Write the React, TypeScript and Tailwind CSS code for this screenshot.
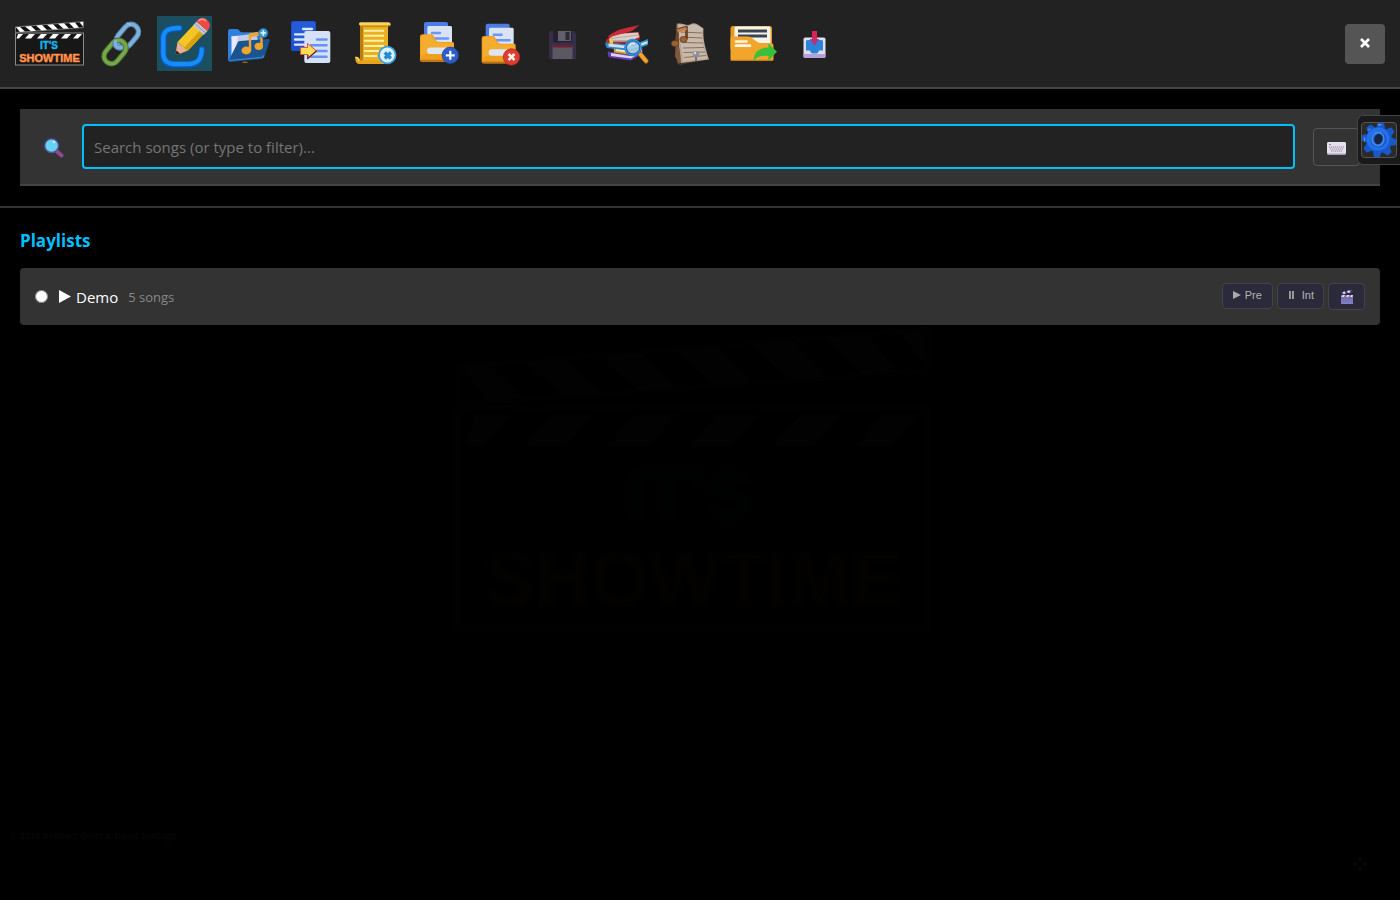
import React, { useState } from 'react';

interface Playlist {
  id: string;
  name: string;
  songs: number;
}

interface IconProps {
  children: React.ReactNode;
}

const playlists: Playlist[] = [{ id: 'demo', name: 'Demo', songs: 5 }];

const Icon = ({ children }: IconProps) => (
  <svg viewBox="0 0 55 55" className="block size-[55px]" fill="none" aria-hidden="true">
    {children}
  </svg>
);

const ShowtimeLogo = ({ className }: { className: string }) => (
  <svg viewBox="0 0 71 45" className={className} aria-hidden="true">
    <rect x="0.5" y="12" width="68" height="32" fill="#171717" stroke="#8a8a8a" />
    <path d="M0.5 6 L68.5 0.6 V6.6 L0.5 11.4 Z" fill="#111" stroke="#8a8a8a" strokeWidth="0.8" />
    <g fill="#fff">
      <path d="M1 6.2 L5 5.9 L10 10.6 L5 11 Z" />
      <path d="M10 5.4 L16 5 L21 9.8 L16 10.2 Z" />
      <path d="M21 4.6 L27 4.1 L32 9 L26.5 9.4 Z" />
      <path d="M32 3.7 L38 3.2 L43 8.2 L37.5 8.6 Z" />
      <path d="M43 2.8 L49 2.3 L54 7.4 L48.5 7.8 Z" />
      <path d="M54 2 L60 1.5 L64 6.7 L59 7.1 Z" />
      <path d="M64.5 1.2 L68 0.9 V5.5 Z" />
      <path d="M3 13 H8 L4 17.5 H1.5 Z" />
      <path d="M14 13 H20 L16 17.5 H10 Z" />
      <path d="M26 13 H32 L28 17.5 H22 Z" />
      <path d="M38 13 H44 L40 17.5 H34 Z" />
      <path d="M50 13 H56 L52 17.5 H46 Z" />
      <path d="M62 13 H67 L63 17.5 H58 Z" />
    </g>
    <text x="34" y="28" textAnchor="middle" fontSize="10" fontWeight="700" fill="#12b5ee" stroke="#12b5ee" strokeWidth="0.4" fontFamily="'Liberation Sans', sans-serif">IT'S</text>
    <text x="34.5" y="40.5" textAnchor="middle" fontSize="11" fontWeight="700" fill="#ffb070" stroke="#f0742a" strokeWidth="0.6" fontFamily="'Liberation Sans', sans-serif">SHOWTIME</text>
  </svg>
);

const LinkIcon = () => (
  <Icon>
    <rect x="20.5" y="12.5" width="26" height="15" rx="7.5" transform="rotate(-50 33.5 20)" stroke="#4f7fa8" strokeWidth="5.5" />
    <rect x="20.5" y="12.5" width="26" height="15" rx="7.5" transform="rotate(-50 33.5 20)" stroke="#7fb0dc" strokeWidth="3.6" />
    <rect x="8" y="28.5" width="26" height="15" rx="7.5" transform="rotate(-50 21 36)" stroke="#46702b" strokeWidth="5.5" />
    <rect x="8" y="28.5" width="26" height="15" rx="7.5" transform="rotate(-50 21 36)" stroke="#76a84b" strokeWidth="3.6" />
    <path d="M22 25 C20 30 23 33 28 31.5" stroke="#4f7fa8" strokeWidth="5.5" />
    <path d="M21.8 24 C20 30 23 33 28.5 31" stroke="#7fb0dc" strokeWidth="3.6" />
    <path d="M33 6.5 L36 9" stroke="#a9cdec" strokeWidth="1" />
  </Icon>
);

const EditIcon = () => (
  <Icon>
    <path d="M22.5 12.3 C12 11.5 6.3 15 6.3 22 V37 C6.3 45 10 48.5 18 48.5 H31 C41 48.5 44.5 44 44.7 33.5" stroke="#0b55c9" strokeWidth="6.6" strokeLinecap="round" />
    <path d="M22.5 12 C12 11.5 6.5 15 6.3 22 V37 C6.3 44.5 10 48 18 48 H31 C41 48 44.5 43 44.7 33.5" stroke="#168cf5" strokeWidth="4.4" strokeLinecap="round" />
    <path d="M20.5 26 L31 34.5 L21 38.5 C19 39 18.3 38 18.8 36.5 Z" fill="#edb08e" />
    <path d="M19.5 34.5 L23 37.6 L20.5 38.7 C19 39 18.3 38 18.8 36.5 Z" fill="#35202b" />
    <path d="M20.5 26 L37.5 8 L47.5 17 L31 34.5 Z" fill="#f3c526" />
    <path d="M27 32 L43.5 14 L47.5 17 L31 34.5 Z" fill="#d9a10e" />
    <path d="M36 9.5 L39.5 5.5 L50.5 15 L46.5 19 Z" fill="#c6c4d0" />
    <path d="M37.8 7.5 L48.5 17" stroke="#8f8c9c" strokeWidth="0.8" />
    <path d="M39.5 5.5 C43 0.5 47 1 50 4 C54 7.5 53.5 11 50.5 15 Z" fill="#ee4b42" />
    <path d="M42 4.5 C44 2.5 47 3 48.5 4.5" stroke="#ff9a8c" strokeWidth="1.5" strokeLinecap="round" />
  </Icon>
);

const MusicFolderIcon = () => (
  <Icon>
    <path d="M8 15.5 C8 13.5 9 13 10.5 13 H17 C19 13 20 16.3 22 16.3 H38 C40 16.3 41 17.5 41 19 V30 L10 45.5 C8.5 45.5 8 44.5 8 43 Z" fill="#2e7fe0" />
    <path d="M11.5 20.5 L36 17.5 L39 28 L14 42 Z" fill="#c5cbe8" />
    <path d="M11.5 20.5 L18 19.7 L14 42 L11.5 44 Z" fill="#e8e8f6" />
    <path d="M17.5 27 C18 25.5 19 25 20.5 25 L48 23 C49.5 23 50 24 49.5 25.5 L44.5 40.5 C44 42 43 42.7 41.5 43 L10.5 46 C9 46 8.7 45 9.2 43.5 Z" fill="#1c548f" />
    <path d="M9.2 44.5 L41.5 41.5 C43 41.3 43.5 41 44 39.5" stroke="#388ee2" strokeWidth="1.2" />
    <path d="M30 35 V18.5 L41.5 16.5 V31" stroke="#eda62f" strokeWidth="2.4" strokeLinejoin="round" />
    <path d="M30 19.5 L41.5 17.5" stroke="#eda62f" strokeWidth="3.5" />
    <ellipse cx="26.3" cy="34.5" rx="4.8" ry="3.9" fill="#f0a52b" />
    <ellipse cx="38.8" cy="30.3" rx="4.2" ry="3.6" fill="#f0a52b" />
    <circle cx="43.3" cy="17" r="4.6" fill="#3c9bd8" stroke="#226da8" strokeWidth="0.8" />
    <path d="M43.3 14.3 V19.7 M40.6 17 H46" stroke="#e6f7ff" strokeWidth="1.5" />
    <path d="M22.5 46.3 H27.5" stroke="#c07c22" strokeWidth="1" />
  </Icon>
);

const CopyDocsIcon = () => (
  <Icon>
    <rect x="8" y="5" width="25" height="30" rx="2" fill="#1c4fd0" />
    <rect x="9" y="6" width="23" height="20" rx="2" fill="#2b62df" opacity="0.6" />
    <path d="M20 13 H29 M12 18.3 H23 M12 23.5 H23 M12 28.7 H21" stroke="#dce9ff" strokeWidth="2.3" strokeLinecap="round" />
    <rect x="21.3" y="15" width="26" height="32" rx="2" fill="#d5e1f5" />
    <path d="M34 23.5 H43.5 M28 29.3 H43.5 M30 35 H43.5 M28 40.7 H43.5" stroke="#6794f2" strokeWidth="2.5" strokeLinecap="round" />
    <path d="M17.5 31.5 H24.5 V27.5 L33.5 35 L24.8 42.5 V38.5 H17.5 Z" fill="#ffdc52" stroke="#d9524a" strokeWidth="1" strokeLinejoin="round" />
    <path d="M33.5 35 L24.8 42.5 V39" stroke="#642230" strokeWidth="1.2" />
  </Icon>
);

const ScrollIcon = () => (
  <Icon>
    <path d="M14 8 H42 V44 C42 47 40 48 37 48 H16 Z" fill="#e9b025" />
    <path d="M14 8 H17 V46 H14 Z" fill="#bd7e10" />
    <path d="M13 8 C13 6.5 14 6.3 16 6.3 H42 C44 6.3 45 7 44.5 9.5 H16 C14 9.5 13 9.5 13 8 Z" fill="#f9d560" />
    <path d="M16 9.5 H44.5 L42 11 H16 Z" fill="#c78a12" />
    <path d="M9.3 41.5 C12 40.5 14 42 14 44.5 H36 V48 H13 C10.5 48 9 45 9.3 41.5 Z" fill="#e9a31b" />
    <path d="M9.3 41.5 C11.5 41 13 42.5 13 45" stroke="#ffe083" strokeWidth="1.3" />
    <path d="M18 14.7 H38 M18 19.7 H38 M18 24.8 H38 M18 30 H38 M18 35 H33 M18 40 H31" stroke="#fff1a0" strokeWidth="1.9" />
    <circle cx="41.3" cy="39" r="8.3" fill="#d9f1fb" stroke="#399fe0" strokeWidth="1.7" />
    <path d="M38.8 36.5 L44.8 42.5 M44.8 36.5 L38.8 42.5" stroke="#248bd2" strokeWidth="3.4" />
  </Icon>
);

const FolderFiles = () => (
  <g>
    <rect x="15" y="6" width="24" height="22" rx="2" fill="#4d7ce6" />
    <path d="M18.3 12 C18.3 10.5 19 10 20.5 10 H41 C42.5 10 43 10.5 43 12 V32 H18.3 Z" fill="#d9e3f4" />
    <path d="M23 17 H31 M23 22.5 H39" stroke="#6b96f3" strokeWidth="2.4" strokeLinecap="round" />
    <path d="M11 21 C11 19 12 18.3 14 18.3 H22 C26 18.3 25 26 30 26 H43 C44.5 26 45 26.5 45 28 V43.5 C45 45 44.5 45.7 43 45.7 H13 C11.5 45.7 11 45 11 43.5 Z" fill="#f0a01f" />
    <path d="M12 20.5 C13 19.3 14 19.3 15 19.3 H21 C25 20 24 27 30 27 H44 V36 C34 39 20 35 12 40 Z" fill="#f8b93e" opacity="0.5" />
    <path d="M11.5 44.5 H44" stroke="#c87012" strokeWidth="1.5" />
    <rect x="18" y="31.5" width="24" height="6.5" rx="3.2" fill="#dfe5f2" />
  </g>
);

const FolderAddIcon = () => (
  <Icon>
    <FolderFiles />
    <circle cx="41.3" cy="39.3" r="8.2" fill="#2c5dc9" stroke="#1f4599" strokeWidth="0.8" />
    <path d="M41.3 34.8 V43.8 M36.8 39.3 H45.8" stroke="#f5f8ff" strokeWidth="2.2" />
  </Icon>
);

const FolderRemoveIcon = () => (
  <Icon>
    <g transform="translate(-1.3 1.8)">
      <FolderFiles />
    </g>
    <circle cx="39.5" cy="41" r="8.2" fill="#de3c30" stroke="#a92c24" strokeWidth="0.8" />
    <path d="M36.5 38 L42.5 44 M42.5 38 L36.5 44" stroke="#fff0ea" strokeWidth="2.6" />
  </Icon>
);

const FloppyIcon = () => (
  <Icon>
    <path d="M16 15 H38.5 L41 17.5 V41.5 C41 42.8 40.3 43.3 39 43.3 H16 C14.7 43.3 14 42.8 14 41.5 V17 C14 15.7 14.7 15 16 15 Z" fill="#352f48" />
    <path d="M18 15 H37 V25 C37 26 36.5 26.3 35.5 26.3 H19.5 C18.5 26.3 18 26 18 25 Z" fill="#251f30" />
    <rect x="23" y="15" width="13" height="10" fill="#625f69" />
    <rect x="30.5" y="16" width="4" height="8" fill="#2d283a" />
    <rect x="17.5" y="29" width="20" height="14" fill="#5c5861" />
    <rect x="17.5" y="29" width="20" height="2.5" fill="#6d1f33" />
  </Icon>
);

const BooksIcon = () => (
  <Icon>
    <path d="M10 35.5 L32 39 L44.5 32 V37.5 L33 44.5 L11.5 41.5 C9.5 40 9.5 37 10 35.5 Z" fill="#6739b8" />
    <path d="M13 37 L32 40 L44 34 V36 L33 42.5 L13 40 Z" fill="#dcd5e6" />
    <path d="M15.5 31 L34 34 L44 28 V33 L33 39 L16 36.5 Z" fill="#d59d2c" />
    <path d="M18 32.5 L34 35 L43 30.5 V32 L33 37 L18 35 Z" fill="#f1e5cb" />
    <path d="M8 25.5 L34 29 L50 23 V29 L34 35 L9 32 C7 30 7 27 8 25.5 Z" fill="#268dc8" />
    <path d="M10.5 27.5 L34 30.5 L49.5 25 V27.5 L34 33 L10.5 30.5 Z" fill="#d8dde3" />
    <path d="M8 24 L16 17 L41 16 L42 23 L31 27.5 L9.5 27 C7.5 26.5 7.5 25 8 24 Z" fill="#b4262e" />
    <path d="M11 23 L17 18 L40 16.5 L41.5 21 L31 25.5 L12 25.5 Z" fill="#d9cfc6" />
    <path d="M12 24.5 L31 24.5 M13 22.5 L41 19" stroke="#a7978e" strokeWidth="0.7" />
    <path d="M9.5 21.5 C13 17 20 13.5 28 12 L41.5 9 L34 15 L16 20 Z" fill="#cd2937" />
    <path d="M11.5 23 H15 V28 L11.5 27.5 Z" fill="#eec94a" />
    <path d="M40.5 36 L48 45" stroke="#b66d18" strokeWidth="5" strokeLinecap="round" />
    <path d="M42.5 38.5 L48 44.8" stroke="#f4a332" strokeWidth="3.5" strokeLinecap="round" />
    <circle cx="35" cy="31.5" r="7.4" fill="#a3c9e6" fillOpacity="0.85" stroke="#1c68b4" strokeWidth="2.6" />
    <circle cx="35" cy="31.5" r="7.8" stroke="#42a3e4" strokeWidth="1" />
    <path d="M31.5 30 C32.5 27.5 35 27 37 28" stroke="#eef7ff" strokeWidth="1.3" />
  </Icon>
);

const SheetMusicIcon = () => (
  <Icon>
    <path d="M16 10 L14 24 L16 47 L19 49.5 L23 48 L45 44 Z" fill="#51392a" />
    <path d="M15.5 8 L17 7 L24 45 L17.5 47.5 L14 40 Z" fill="#80583c" />
    <path d="M16.5 8 C21 6 26 11 30 8 C34 5.5 38 9 42.5 12.5 C41.5 24 45 34 48 43.5 L20 47 C20 35 15 20 16.5 8 Z" fill="#b7a797" />
    <path d="M18 9.5 C22 8.5 26 11.5 31 9 C34 8 38 10 41.5 12.5 C40 24 43 34 46 42.5 L22 45 C22 34 17 20 18 9.5 Z" fill="#c8bbad" />
    <path d="M19.5 16 L41 17 M20 21 L41 22 M21 26.5 L42 27 M22 32 L43 31.5 M22.5 36.5 L44 36 M23 41.5 L45 39.5" stroke="#8b6e55" strokeWidth="1" />
    <path d="M16.5 27 V13.5 L25.5 11 V23" stroke="#704424" strokeWidth="2.8" strokeLinejoin="round" />
    <path d="M16.5 15 L25.5 12.5" stroke="#c28352" strokeWidth="3" />
    <ellipse cx="14" cy="27.5" rx="3.8" ry="3.1" fill="#9c6236" stroke="#583319" strokeWidth="0.7" />
    <ellipse cx="22.5" cy="23.5" rx="3.6" ry="3" fill="#9c6236" stroke="#583319" strokeWidth="0.7" />
    <circle cx="35" cy="38.3" r="3.3" fill="#8f8e92" />
    <circle cx="34" cy="37" r="1.3" fill="#d5d4d6" />
    <path d="M35 41 V45" stroke="#5e5b5d" strokeWidth="1.5" />
  </Icon>
);

const FolderExportIcon = () => (
  <Icon>
    <rect x="6.5" y="10" width="41.5" height="25" rx="2.5" fill="#e79a25" />
    <path d="M10.5 13 C10.5 11 11 10.5 13 10.5 H44 C46 10.5 46.5 11 46.5 13 V30 H10.5 Z" fill="#f6f4ee" />
    <path d="M14 15 H43 M14 20 H43" stroke="#3b454b" strokeWidth="3" />
    <path d="M6.5 22.5 C6.5 21 7.5 20.5 9 20.5 H24 C28 20.5 32 26.5 36 27 H46 C48.5 27 49.5 28 49.5 30 V43 C49.5 44.5 49 45 47.5 45 H8.5 C7 45 6.5 44.5 6.5 43 Z" fill="#f2a52b" />
    <path d="M7 44.3 H49" stroke="#c77b15" strokeWidth="1.2" />
    <path d="M12 25.5 H22.5 M12 29.7 H26" stroke="#fff6e1" strokeWidth="2.7" strokeLinecap="round" />
    <path d="M29.5 45 C30 36 35 31.5 44.5 31.5 V27.5 L53 35.8 L44.5 44.5 V40 C37 39 32 41 29.5 45 Z" fill="#37c13a" />
  </Icon>
);

const InboxIcon = () => (
  <Icon>
    <path d="M18.5 21.5 H36.5 C38 21.5 38.5 22.2 38.5 23.5 V40 C38.5 41.3 38 42 36.5 42 H18.5 C17 42 16.5 41.3 16.5 40 V23.5 C16.5 22.2 17 21.5 18.5 21.5 Z" fill="#e1dcf0" />
    <path d="M16.5 38 H38.5 V40 C38.5 41.3 38 42 36.5 42 H18.5 C17 42 16.5 41.3 16.5 40 Z" fill="#b6a0db" />
    <path d="M19 26 C19 24.5 19.5 24 21 24 H34 C35.5 24 36 24.5 36 26 V34.5 H32.5 C31.5 34.5 31.5 37.5 29.5 37.5 H25.5 C23.5 37.5 23.5 34.5 22.5 34.5 H19 Z" fill="#2b84d8" />
    <path d="M25 15 H30 V23 H32 L27.5 29.5 L23 23 H25 Z" fill="#da2158" />
    <path d="M25 23 H23 L27.5 29.5 L32 23 Z" fill="#b33678" />
  </Icon>
);

const GearIcon = () => (
  <svg viewBox="0 0 36 36" className="block size-9" fill="none" aria-hidden="true">
    <g fill="#1759c9" transform="rotate(8 18 18)">
      <circle cx="18" cy="18" r="13" />
      <path d="M13 8 L15 1.5 C15.2 0.7 15.7 0.5 16.5 0.5 H19.5 C20.3 0.5 20.8 0.7 21 1.5 L23 8 V28 L21 34.5 C20.8 35.3 20.3 35.5 19.5 35.5 H16.5 C15.7 35.5 15.2 35.3 15 34.5 L13 28 Z" />
      <path d="M13 8 L15 1.5 C15.2 0.7 15.7 0.5 16.5 0.5 H19.5 C20.3 0.5 20.8 0.7 21 1.5 L23 8 V28 L21 34.5 C20.8 35.3 20.3 35.5 19.5 35.5 H16.5 C15.7 35.5 15.2 35.3 15 34.5 L13 28 Z" transform="rotate(45 18 18)" />
      <path d="M13 8 L15 1.5 C15.2 0.7 15.7 0.5 16.5 0.5 H19.5 C20.3 0.5 20.8 0.7 21 1.5 L23 8 V28 L21 34.5 C20.8 35.3 20.3 35.5 19.5 35.5 H16.5 C15.7 35.5 15.2 35.3 15 34.5 L13 28 Z" transform="rotate(90 18 18)" />
      <path d="M13 8 L15 1.5 C15.2 0.7 15.7 0.5 16.5 0.5 H19.5 C20.3 0.5 20.8 0.7 21 1.5 L23 8 V28 L21 34.5 C20.8 35.3 20.3 35.5 19.5 35.5 H16.5 C15.7 35.5 15.2 35.3 15 34.5 L13 28 Z" transform="rotate(135 18 18)" />
    </g>
    <circle cx="17" cy="17" r="11.5" fill="#2270ea" />
    <circle cx="17.5" cy="17.5" r="8" fill="#1b56c0" />
    <ellipse cx="17" cy="17" rx="5.8" ry="6.5" stroke="#3f88f2" strokeWidth="1.8" />
    <ellipse cx="17.5" cy="17" rx="4" ry="5.3" fill="#17263f" transform="rotate(15 17.5 17)" />
    <path d="M17 2.5 L20 3 M7 8 L9 7 M3.500 16 V19" stroke="#4f92f5" strokeWidth="1.3" strokeLinecap="round" />
  </svg>
);

const MagnifierIcon = () => (
  <svg viewBox="0 0 20 20" className="block size-5" aria-hidden="true">
    <path d="M12.5 13 L17.5 17.5" stroke="#8a4b91" strokeWidth="4" strokeLinecap="round" />
    <circle cx="7.6" cy="7.7" r="6.8" fill="#67d2f2" stroke="#5553a5" strokeWidth="1.3" />
    <circle cx="10" cy="4" r="1.2" fill="#c8f2ff" />
  </svg>
);

const KeyboardIcon = () => (
  <svg viewBox="0 0 19 13" className="block h-[13px] w-[19px]" aria-hidden="true">
    <rect width="19" height="13" rx="1.5" fill="#a99bbd" />
    <rect width="19" height="11.5" rx="1.5" fill="#e6dfee" />
    <path d="M2 2.5 H4" stroke="#8c839a" strokeWidth="1" />
    <path d="M2 5 H17 M3 7 H16 M4 9 H15" stroke="#90889b" strokeWidth="1.2" strokeDasharray="1.3 0.7" />
  </svg>
);

const ClapperIcon = () => (
  <svg viewBox="0 0 14 15" className="block h-[15px] w-[14px]" aria-hidden="true">
    <defs>
      <linearGradient id="clapper" x1="0" y1="0" x2="0" y2="1">
        <stop offset="0" stopColor="#80608f" />
        <stop offset="1" stopColor="#7c83cf" />
      </linearGradient>
    </defs>
    <rect x="1" y="6" width="12" height="9" fill="url(#clapper)" />
    <path d="M1 3.5 L12 0.5 L12.7 2.8 L1.5 5.8 Z" fill="#51426e" />
    <path d="M2.5 3.1 L5 2.4 L5.5 4.7 L3.5 5.2 Z M7 1.9 L9.5 1.2 L10.5 3.4 L8 4 Z M2.5 6 H5 L4 8 H1.5 Z M7 6 H9.5 L8.5 8 H6 Z M11 6 H13 L12.5 8 H10 Z" fill="#ddd6ff" />
  </svg>
);

const tools = [
  { label: 'Link', icon: <LinkIcon /> },
  { label: 'Edit', icon: <EditIcon />, active: true },
  { label: 'Add music', icon: <MusicFolderIcon /> },
  { label: 'Copy', icon: <CopyDocsIcon /> },
  { label: 'Clear', icon: <ScrollIcon /> },
  { label: 'New playlist', icon: <FolderAddIcon /> },
  { label: 'Delete playlist', icon: <FolderRemoveIcon /> },
  { label: 'Save', icon: <FloppyIcon />, disabled: true },
  { label: 'Library', icon: <BooksIcon /> },
  { label: 'Sheet music', icon: <SheetMusicIcon /> },
  { label: 'Export', icon: <FolderExportIcon /> },
  { label: 'Import', icon: <InboxIcon /> },
];

const smallButton = 'flex items-center rounded border border-[#444] bg-[#2a2a3a] font-["Liberation_Sans",sans-serif] text-[11px] text-[#b4b4b4]';

const Toolbar = () => (
  <header className="flex items-center justify-between border-b-2 border-[#444] bg-[#222] px-[15px] py-4">
    <div className="flex items-center gap-2">
      <ShowtimeLogo className="block h-[45px] w-[71px]" />
      {tools.map((tool) => (
        <button
          key={tool.label}
          type="button"
          aria-label={tool.label}
          disabled={tool.disabled}
          className={tool.active ? 'bg-[#1b4f60]' : ''}
        >
          {tool.icon}
        </button>
      ))}
    </div>
    <button type="button" aria-label="Close" className="flex size-10 items-center justify-center rounded bg-[#555] pb-0.5">
      <svg viewBox="0 0 12 12" className="size-3" aria-hidden="true">
        <path d="M2 2 L10 10 M10 2 L2 10" stroke="#fff" strokeWidth="2.6" />
      </svg>
    </button>
  </header>
);

const App = () => {
  const [query, setQuery] = useState('');
  const [selectedId, setSelectedId] = useState<string | null>(null);

  return (
    <div className="relative flex min-h-screen flex-col bg-black font-['Open_Sans','Noto_Sans',sans-serif] text-white">
      <Toolbar />

      <section className="border-b-2 border-[#333] p-5">
        <div className="flex items-center border-b-2 border-[#444] bg-[#333] px-5 py-[15px]">
          <label htmlFor="search" aria-label="Search songs" className="flex w-[42px] pt-0.5 pl-1">
            <MagnifierIcon />
          </label>
          <input
            id="search"
            type="text"
            value={query}
            onChange={(e) => setQuery(e.target.value)}
            placeholder="Search songs (or type to filter)..."
            className="h-[45px] min-w-0 flex-1 rounded border-2 border-[#00bfff] bg-[#222] px-2.5 text-[15px] outline-none placeholder:text-[#757575]"
          />
          <button type="button" aria-label="Keyboard" className="ml-[18px] flex h-[38px] w-[47px] items-center justify-center rounded border border-[#555] pt-1">
            <KeyboardIcon />
          </button>
        </div>
      </section>

      <div className="absolute top-[115px] right-0 rounded-l-md border border-r-0 border-[#444] bg-[#1a1a1a] py-1.5 pr-[3px] pl-[3px]">
        <button type="button" aria-label="Settings" className="block rounded bg-[#2a2a2a] outline outline-offset-[-1px] outline-[#555]">
          <GearIcon />
        </button>
      </div>

      <main className="px-5 pt-5">
        <h2 className="mb-3.5 text-[17px] leading-[26px] font-bold text-[#00bfff]">Playlists</h2>
        <ul>
          {playlists.map((p) => (
            <li key={p.id} className="flex items-center justify-between rounded bg-[#333] p-[15px]">
              <div className="flex items-center">
                <input
                  id={p.id}
                  type="radio"
                  name="playlist"
                  checked={selectedId === p.id}
                  onChange={() => setSelectedId(p.id)}
                  className="mr-[11px] size-[13px]"
                />
                <label htmlFor={p.id} className="flex items-center text-[15px] leading-6">
                  <svg viewBox="0 0 12 13" className="mr-[5px] h-[13px] w-3" aria-hidden="true">
                    <path d="M0 0 L12 6.5 L0 13 Z" fill="#fff" />
                  </svg>
                  {p.name}
                </label>
                <span className="ml-2.5 text-[13px] leading-6 text-[#888]">{p.songs} songs</span>
              </div>
              <div className="flex items-start gap-1">
                <button type="button" className={`${smallButton} h-[26px] gap-1 px-2.5 pb-0.5`}>
                  <svg viewBox="0 0 8 8" className="size-2" aria-hidden="true">
                    <path d="M0 0 L8 4 L0 8 Z" fill="#aaa" />
                  </svg>
                  Pre
                </button>
                <button type="button" className={`${smallButton} h-[26px] gap-1.5 px-[9px] pb-0.5`}>
                  <svg viewBox="0 0 9 8" className="h-2 w-[9px]" aria-hidden="true">
                    <path d="M3 0 V8 M6 0 V8" stroke="#999" strokeWidth="2" />
                  </svg>
                  Int
                </button>
                <button type="button" aria-label="Scene" className={`${smallButton} h-[27px] w-[37px] justify-center`}>
                  <ClapperIcon />
                </button>
              </div>
            </li>
          ))}
        </ul>
      </main>

      <div className="flex flex-1 justify-center opacity-[0.008]">
        <ShowtimeLogo className="h-[311px] w-[490px]" />
      </div>

      <footer className="flex items-start justify-between pr-5 pb-4 pl-2.5">
        <p className="text-[9px] leading-4 font-semibold text-[#080808]">© 2025 Robbert Ernst &amp; David Nottage</p>
        <button type="button" aria-label="Move" className="mt-4 flex size-10 items-center justify-center rounded-full border border-[#030303]">
          <svg viewBox="0 0 16 16" className="size-4" fill="#020809" aria-hidden="true">
            <path d="M8 0 L11 3 L8 6 L5 3 Z M8 10 L11 13 L8 16 L5 13 Z M0 8 L3 5 L6 8 L3 11 Z M10 8 L13 5 L16 8 L13 11 Z" />
          </svg>
        </button>
      </footer>
    </div>
  );
};

export default App;
